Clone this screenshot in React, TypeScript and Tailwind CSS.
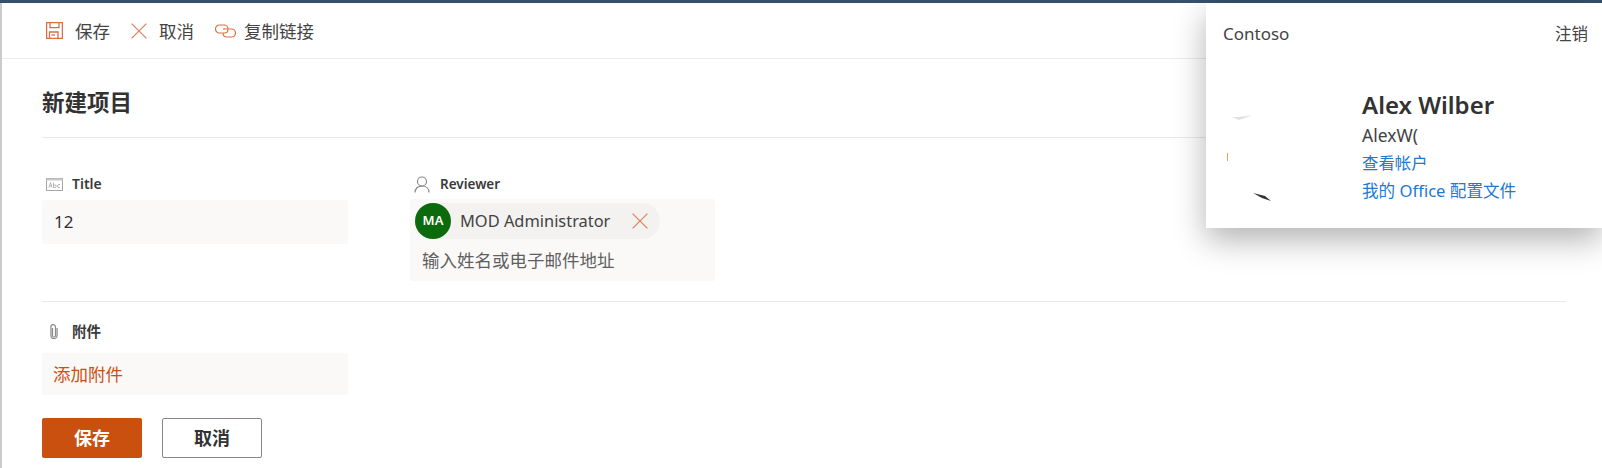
const FONT = "font-['Noto_Sans','Noto_Sans_CJK_SC',sans-serif]";

function SaveIcon() {
  return (
    <svg width="17" height="17" viewBox="0 0 17 17" fill="none" stroke="#d9703f" strokeWidth="1.300">
      <path d="M.6.6h15.800v15.800H.6z" />
      <path d="M4 .6v5h9V.6M3.500 16.400V10h8.500v6.400" />
      <path d="M5.500 13h3.500" />
    </svg>
  );
}

function CloseIcon({ size = 16 }: { size?: number }) {
  return (
    <svg width={size} height={size} viewBox="0 0 16 16" fill="none" stroke="#dd8460" strokeWidth="1.300">
      <path d="M.6.6l14.800 14.800M15.400.6L.6 15.400" />
    </svg>
  );
}

function LinkIcon() {
  return (
    <svg width="21" height="14" viewBox="0 0 21 14" fill="none" stroke="#d9703f" strokeWidth="1.200">
      <path d="M6.500 9H4.500a4 4 0 0 1 0-8h4.500a4 4 0 0 1 4 4" />
      <path d="M8.200 5.200A2.400 2.400 0 0 1 10 5h6.500a4 4 0 0 1 0 8H12a4 4 0 0 1-4-3.800" />
      <path d="M13 5.500a3.600 3.600 0 0 1-3.500 3.500h-3" />
    </svg>
  );
}

function AbcIcon() {
  return (
    <svg width="17" height="13" viewBox="0 0 17 13" fill="none">
      <rect x=".5" y=".5" width="16" height="12" stroke="#a6a6a6" fill="#fff" />
      <rect x=".5" y=".5" width="16" height="2" fill="#c8c8c8" />
      <path d="M3 9.500l1.500-5 1.500 5M3.500 8h2M7.500 4.500v5h1.500a1.200 1.200 0 0 0 0-2.500h-1.500M14 6.500h-1a1.500 1.500 0 0 0 0 3h1" stroke="#9a9a9a" strokeWidth=".7" />
    </svg>
  );
}

function PersonIcon() {
  return (
    <svg width="16" height="17" viewBox="0 0 16 17" fill="none" stroke="#858585" strokeWidth="1.100">
      <circle cx="8" cy="5.500" r="4.500" />
      <path d="M1 16.500c0-4 3-6.500 7-6.500s7 2.500 7 6.500" />
    </svg>
  );
}

function ClipIcon() {
  return (
    <svg width="8" height="15" viewBox="0 0 8 15" fill="none" stroke="#8a8a8a" strokeWidth="1.200">
      <path d="M2.500 4v7.500a1.500 1.500 0 0 0 3 0V3a2.300 2.300 0 0 0-4.600 0v8.500a3 3 0 0 0 6.200 0V4" />
    </svg>
  );
}

function Action({ icon, label, gap }: { icon: React.ReactNode; label: string; gap: string }) {
  return (
    <div className={`flex items-center ${gap}`}>
      <span className="flex">{icon}</span>
      <span className="text-[17.5px] leading-6 text-[#444]">{label}</span>
    </div>
  );
}

function FieldLabel({ icon, label, size }: { icon: React.ReactNode; label: string; size: string }) {
  return (
    <div className="flex h-[20px] items-center">
      <span className="flex w-[24px] justify-center">{icon}</span>
      <span className={`ml-[6px] font-semibold leading-5 text-[#3a3a3a] ${size}`}>{label}</span>
    </div>
  );
}

export default function App() {
  return (
    <div className={`relative h-[468px] w-[1602px] overflow-hidden bg-white ${FONT}`}>
      <div className="h-[3px] bg-[#34506b]" />
      <div className="h-[465px] border-l-2 border-[#cbcbcb]">
        <div className="flex h-[56px] items-center gap-[21px] border-b border-[#ececec] pl-[44px]">
          <Action icon={<SaveIcon />} label="保存" gap="gap-[12px]" />
          <Action icon={<CloseIcon />} label="取消" gap="gap-[12px]" />
          <Action icon={<LinkIcon />} label="复制链接" gap="gap-[8px]" />
        </div>

        <div className="pl-[40px] pr-[36px]">
          <div className="flex h-[79px] items-center border-b border-[#e8e8e8] pt-[10px]">
            <h1 className="text-[22.500px] font-semibold leading-8 text-[#323232]">新建项目</h1>
          </div>

          <div className="flex h-[164px] gap-[62px] border-b border-[#e8e8e8] pt-[36px]">
            <div className="w-[306px]">
              <FieldLabel icon={<AbcIcon />} label="Title" size="text-[14px]" />
              <div className="mt-[6px] flex h-[44px] items-center rounded-[2px] bg-[#faf9f8] pl-[12px] text-[17px] text-[#323232]">
                12
              </div>
            </div>
            <div className="w-[305px]">
              <FieldLabel icon={<PersonIcon />} label="Reviewer" size="text-[13.500px]" />
              <div className="mt-[5px] h-[82px] rounded-[2px] bg-[#faf9f8] pl-[5px] pt-[4px]">
                <div className="flex h-[36px] w-[245px] items-center rounded-full bg-[#f3f2f1]">
                  <div className="flex h-[36px] w-[36px] items-center justify-center rounded-full bg-[#0b6a0b] text-[13px] font-semibold text-white">
                    MA
                  </div>
                  <span className="ml-[9px] text-[16.400px] text-[#424242]">MOD Administrator</span>
                  <span className="ml-[22px] flex"><CloseIcon /></span>
                </div>
                <div className="mt-[10px] pl-[7px] text-[17.500px] leading-[22px] text-[#5f5f5f]">输入姓名或电子邮件地址</div>
              </div>
            </div>
          </div>

          <div className="w-[306px] pt-[19px]">
            <FieldLabel icon={<ClipIcon />} label="附件" size="text-[14.500px]" />
            <div className="mt-[12px] flex h-[42px] items-center rounded-[2px] bg-[#faf9f8] pl-[11px] text-[17.500px] text-[#ca5010]">
              添加附件
            </div>
          </div>

          <div className="mt-[23px] flex gap-[20px]">
            <button className="flex h-[40px] w-[100px] items-center justify-center rounded-[2px] bg-[#ca5010] text-[18px] font-semibold text-white">
              保存
            </button>
            <button className="flex h-[40px] w-[100px] items-center justify-center rounded-[2px] border border-[#8a8886] bg-white text-[18px] font-semibold text-[#323232]">
              取消
            </button>
          </div>
        </div>
      </div>

      <div className="absolute left-[1206px] top-[3px] h-[225px] w-[396px] bg-white shadow-[0_12px_30px_rgba(0,0,0,0.3)]">
        <div className="flex items-center justify-between pl-[17px] pr-[14px] pt-[20px] text-[17px] leading-[22px] text-[#444]">
          <span>Contoso</span>
          <span className="text-[16.500px]">注销</span>
        </div>
        <div className="relative mt-[45px] pl-[156px]">
          <svg className="absolute left-[20px] top-[13px]" width="60" height="100" viewBox="0 0 60 100" fill="none">
            <path d="M6 14l7 0 14-2-14 5z" fill="#e4e2dc" />
            <path d="M1 50l1 0 0 8-1 0z" fill="#e8a45a" />
            <path d="M27 90l12 3 6 5-9-3z" fill="#333" />
          </svg>
          <div className="text-[24px] font-semibold leading-[30px] text-[#323232]">Alex Wilber</div>
          <div className="mt-[5px] text-[17.500px] leading-5 text-[#424242]">AlexW(</div>
          <div className="mt-[8px] text-[16.400px] leading-5 text-[#1f78d1]">查看帐户</div>
          <div className="mt-[8px] text-[16.600px] leading-5 text-[#1f78d1]">我的 Office 配置文件</div>
        </div>
      </div>
    </div>
  );
}
